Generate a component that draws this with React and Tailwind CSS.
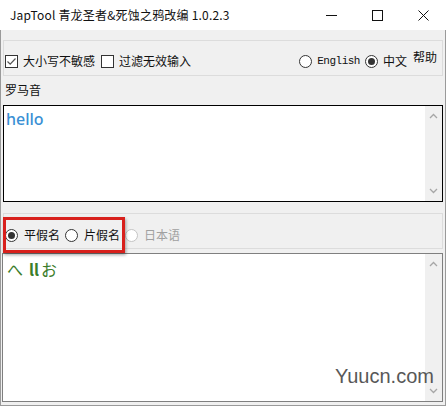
// Windows-style JapTool converter window: options panel, romaji input, kana output.
const cjk = "font-['Noto_Sans_CJK_SC',sans-serif]";

const CheckBox = ({ checked }) => (
  <span className="w-[13px] h-[13px] border border-[#333] bg-white flex items-center justify-center shrink-0">
    {checked && (
      <svg width="11" height="11" viewBox="0 0 11 11">
        <path d="M1.5 5.5 L4.2 8.2 L9.5 2.5" fill="none" stroke="#555" strokeWidth="1.2" />
      </svg>
    )}
  </span>
);

const Radio = ({ checked, disabled }) => (
  <span
    className={`w-[13px] h-[13px] rounded-full border bg-white flex items-center justify-center shrink-0 ${
      disabled ? 'border-[#c4c4c4]' : 'border-[#333]'
    }`}
  >
    {checked && <span className="w-[7px] h-[7px] rounded-full bg-[#333]" />}
  </span>
);

const ScrollBar = () => (
  <div className="w-[17px] bg-[#f0f0f0] flex flex-col justify-between items-center py-[7px]">
    <svg width="9" height="6" viewBox="0 0 9 6">
      <path d="M1 5 L4.5 1.5 L8 5" fill="none" stroke="#a6a6a6" strokeWidth="1.3" />
    </svg>
    <svg width="9" height="6" viewBox="0 0 9 6">
      <path d="M1 1 L4.5 4.5 L8 1" fill="none" stroke="#a6a6a6" strokeWidth="1.3" />
    </svg>
  </div>
);

const App = () => {
  return (
    <div className={`w-[446px] h-[406px] relative overflow-hidden bg-white ${cjk}`}>
      {/* Title bar */}
      <div className="h-[30px] bg-white flex items-center">
        <span className="pl-[10px] text-[12px] leading-[16px] text-[#111] flex-1 tracking-[0.2px]">
          JapTool 青龙圣者&amp;死蚀之鸦改编 1.0.2.3
        </span>
        <div className="w-[46px] h-[30px] flex items-center justify-center pl-[1px]">
          <svg width="11" height="11" viewBox="0 0 11 11">
            <path d="M0 5.5 H11" stroke="#111" strokeWidth="1" />
          </svg>
        </div>
        <div className="w-[46px] h-[30px] flex items-center justify-center">
          <svg width="11" height="11" viewBox="0 0 11 11">
            <rect x="0.5" y="0.5" width="10" height="10" fill="none" stroke="#111" strokeWidth="1" />
          </svg>
        </div>
        <div className="w-[46px] h-[30px] flex items-center justify-center">
          <svg width="11" height="11" viewBox="0 0 11 11">
            <path d="M0.5 0.5 L10.5 10.5 M10.5 0.5 L0.5 10.5" stroke="#111" strokeWidth="1" />
          </svg>
        </div>
      </div>

      {/* Body */}
      <div className="h-[376px] bg-[#f0f0f0] border-l border-r border-b border-[#9a9a9a] flex flex-col">
        {/* Options panel */}
        <div className="mt-[10px] ml-[2px] w-[440px] h-[36px] border border-[#dcdcdc] flex items-center justify-between pt-[6px] pl-[1px] pr-[5px] text-[12px] leading-[16px] text-[#111]">
          <div className="flex items-center">
            <CheckBox checked />
            <span className="ml-[5px]">大小写不敏感</span>
            <span className="ml-[6px]"><CheckBox /></span>
            <span className="ml-[5px]">过滤无效输入</span>
          </div>
          <div className="flex items-center self-stretch">
            <Radio />
            <span className="ml-[5px] font-['Liberation_Mono',monospace] text-[11px] tracking-[-0.5px]">English</span>
            <span className="ml-[5px]"><Radio checked /></span>
            <span className="ml-[5px]">中文</span>
            <span className="ml-[6px] self-start mt-[2px]">帮助</span>
          </div>
        </div>

        {/* Romaji label */}
        <div className="h-[29px] pt-[6px] pl-[4px] text-[12px] leading-[16px] text-[#111]">罗马音</div>

        {/* Romaji input */}
        <div className="ml-[2px] w-[440px] h-[97px] border border-black bg-white flex">
          <div className="flex-1 pl-[2px] pt-[3px] font-['Noto_Sans',sans-serif] font-medium text-[16px] leading-[20px] text-[#3a8fd4]">
            hello
          </div>
          <ScrollBar />
        </div>

        {/* Kana choice panel */}
        <div className="mt-[11px] ml-[2px] w-[440px] h-[36px] border border-[#dcdcdc] flex items-center pt-[8px] pl-[1px] text-[12px] leading-[16px] text-[#111]">
          <Radio checked />
          <span className="ml-[6px]">平假名</span>
          <span className="ml-[5px]"><Radio /></span>
          <span className="ml-[6px]">片假名</span>
          <span className="ml-[5px]"><Radio disabled /></span>
          <span className="ml-[6px] text-[#a0a0a0]">日本语</span>
        </div>

        {/* Kana output */}
        <div className="mt-[4px] ml-[1px] w-[441px] h-[149px] border border-[#7f7f7f] bg-white flex">
          <div className="flex-1 flex items-start pl-[4px] pt-[5px] text-[16px] leading-[20px] text-[#3b7d2b]">
            <span>へ</span>
            <span className="ml-[6px] font-bold">ll</span>
            <span className="ml-[2px]">お</span>
          </div>
          <ScrollBar />
        </div>
      </div>

      {/* Red highlight over the kana radios */}
      <div className="absolute left-[3px] top-[217px] w-[122px] h-[36px] border-[3px] border-[#d8201c] shadow-[1px_2px_3px_rgba(0,0,0,0.35)]" />

      {/* Watermark */}
      <div className="absolute left-[335px] top-[362px] font-['Liberation_Sans',sans-serif] text-[20px] leading-[28px] text-[#585858]">
        Yuucn.com
      </div>
    </div>
  );
};

export default App;
